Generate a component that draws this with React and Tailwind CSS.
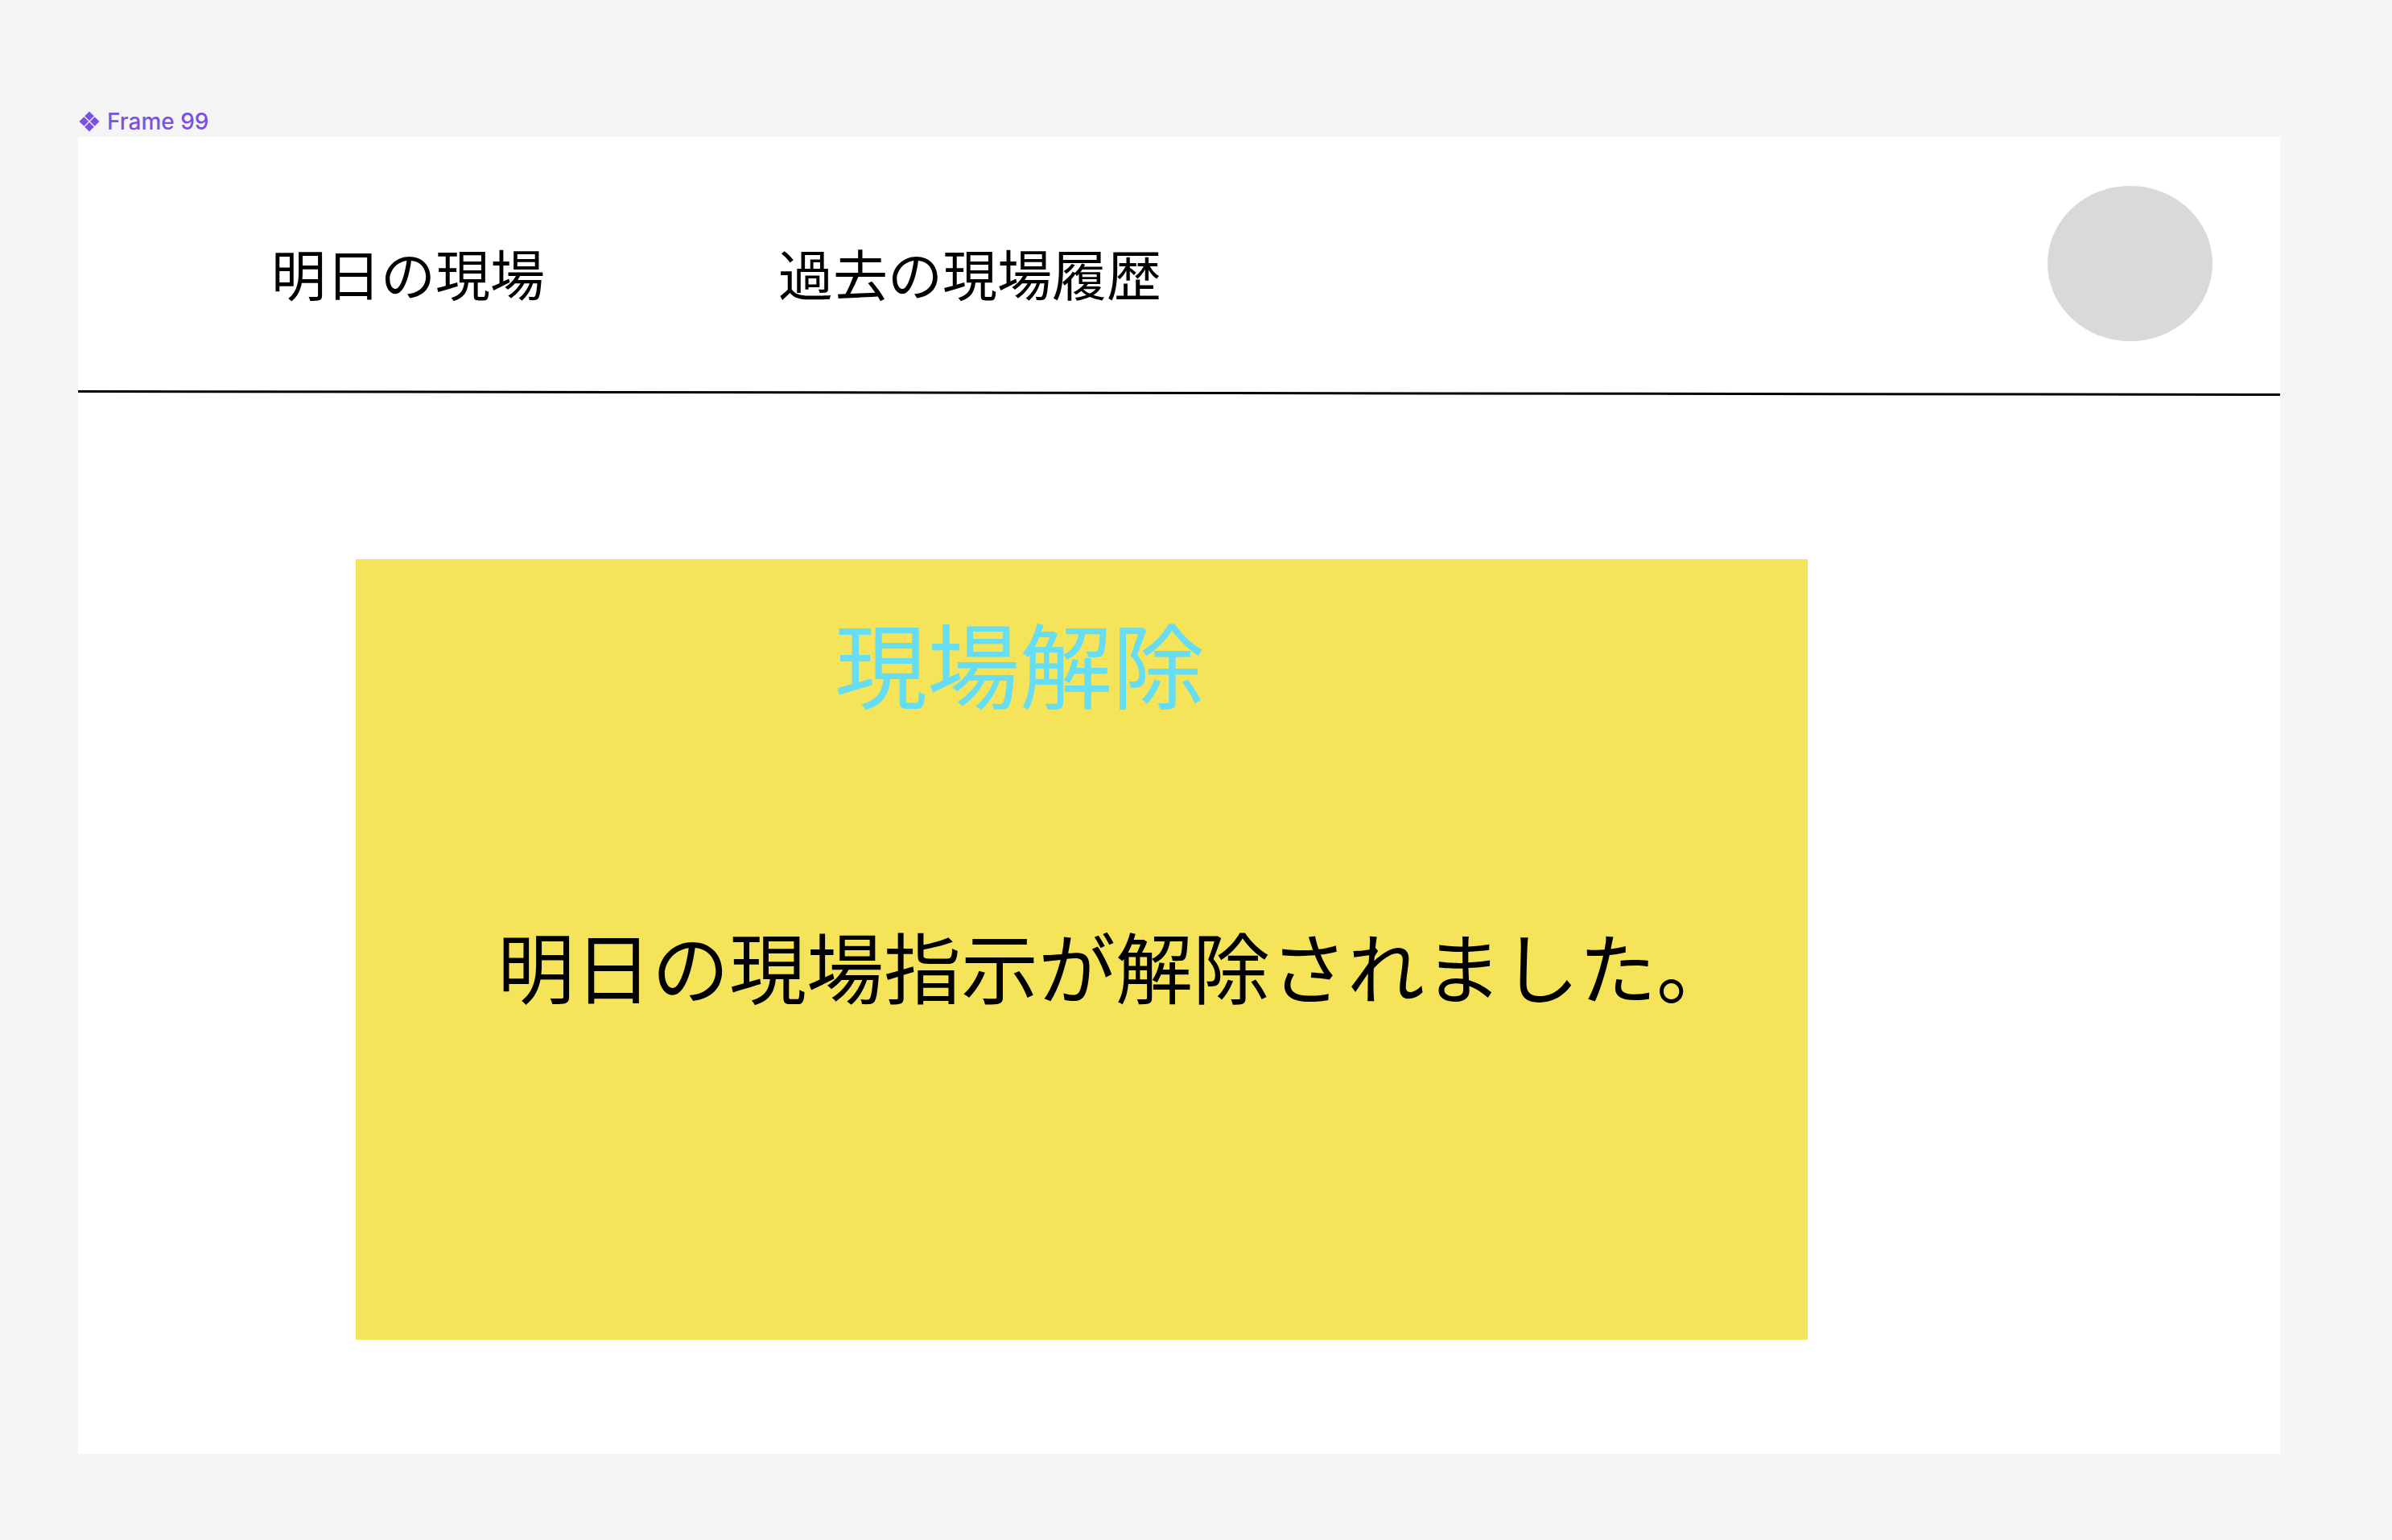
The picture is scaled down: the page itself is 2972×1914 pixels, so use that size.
import React from 'react';

const jp = { fontFamily: '"Noto Sans CJK JP", "Noto Sans", sans-serif' };

function ComponentIcon() {
  return (
    <svg width="28" height="28" viewBox="0 0 28 28" fill="#7b50e4">
      <path d="M14 1.5 19.8 7.3 14 13.1 8.2 7.3Z" />
      <path d="M7.3 8.2 13.1 14 7.3 19.8 1.5 14Z" />
      <path d="M20.7 8.2 26.5 14 20.7 19.8 14.9 14Z" />
      <path d="M14 14.9 19.8 20.7 14 26.5 8.2 20.7Z" />
    </svg>
  );
}

export default function App() {
  return (
    <div className="w-[2972px] h-[1914px] bg-[#f5f5f5] overflow-hidden">
      {/* Figma frame label */}
      <div className="flex items-center gap-[8px] pl-[97px] pt-[131px] h-[170px] text-[#7b50e4] text-[28px] leading-none" style={{ fontFamily: 'Inter, "Liberation Sans", sans-serif' }}>
        <ComponentIcon />
        <span className="font-medium">Frame 99</span>
      </div>

      {/* Frame */}
      <div className="ml-[97px] w-[2736px] h-[1637px] bg-white" style={jp}>
        {/* Header */}
        <div className="flex h-[315px]">
          <nav className="flex items-start gap-[290px] pl-[240px] pt-[135px] text-[68px] leading-none text-black">
            <a>明日の現場</a>
            <a>過去の現場履歴</a>
          </nav>
          <div className="ml-auto mr-[84px] mt-[61px] w-[205px] h-[193px] rounded-[50%] bg-[#d9d9d9]"></div>
        </div>
        <svg width="2736" height="8" className="block">
          <line x1="0" y1="1.5" x2="2736" y2="5.5" stroke="#000" strokeWidth="3" />
        </svg>

        {/* Content */}
        <div className="pl-[345px] pt-[202px]">
          <div className="w-[1804px] h-[970px] bg-[#f5e45a]">
            <h1 className="pl-[595px] pt-[70px] text-[115px] leading-none font-normal text-[#66ddf2]">
              現場解除
            </h1>
            <p className="pl-[176px] pt-[271px] text-[96px] leading-none text-black whitespace-nowrap">
              明日の現場指示が解除されました。
            </p>
          </div>
        </div>
      </div>
    </div>
  );
}
